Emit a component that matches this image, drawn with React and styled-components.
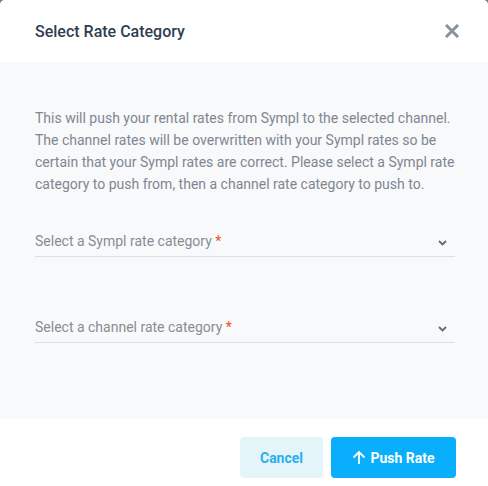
import React from 'react';
import styled, { createGlobalStyle } from 'styled-components';

const GlobalStyle = createGlobalStyle`
  html, body {
    margin: 0;
    padding: 0;
    background: #7a7a7a;
  }
  * { box-sizing: border-box; }
`;

function App() {
  return (
    <>
      <GlobalStyle />
      <Modal>
        <Header>
          <Title>Select Rate Category</Title>
          <CloseButton aria-label="close">
            <svg width="14" height="14" viewBox="0 0 14 14">
              <path d="M2 2L12 12M12 2L2 12" stroke="#8a939d" strokeWidth="3" strokeLinecap="square" />
            </svg>
          </CloseButton>
        </Header>
        <Body>
          <Intro>
            This will push your rental rates from Sympl to the selected channel.
            The channel rates will be overwritten with your Sympl rates so be
            certain that your Sympl rates are correct. Please select a Sympl rate
            category to push from, then a channel rate category to push to.
          </Intro>
          <Field>
            <Placeholder>Select a Sympl rate category <Req>*</Req></Placeholder>
            <Chevron />
          </Field>
          <Field second>
            <Placeholder>Select a channel rate category <Req>*</Req></Placeholder>
            <Chevron />
          </Field>
        </Body>
        <Footer>
          <CancelButton>Cancel</CancelButton>
          <PushButton>
            <svg width="14" height="15" viewBox="0 0 14 15">
              <path d="M7 14V2M1.5 7.5L7 2l5.5 5.5" stroke="#fff" strokeWidth="1.8" fill="none" />
            </svg>
            Push Rate
          </PushButton>
        </Footer>
      </Modal>
    </>
  );
}

export default App;

function Chevron() {
  return (
    <ChevronBox>
      <svg width="9" height="6" viewBox="0 0 9 6">
        <path d="M1 1l3.5 3.5L8 1" stroke="#5d6b7a" strokeWidth="1.8" fill="none" />
      </svg>
    </ChevronBox>
  );
}

const Modal = styled.div`
  width: 488px;
  height: 486px;
  background: #fff;
  border-radius: 5px 5px 0 0;
  overflow: hidden;
  display: flex;
  flex-direction: column;
  font-family: Roboto, "Liberation Sans", sans-serif;
`;

const Header = styled.div`
  height: 62px;
  display: flex;
  align-items: center;
  justify-content: space-between;
  padding: 0 29px 0 35px;
  background: #fff;
`;

const Title = styled.h2`
  margin: 0;
  font-size: 16px;
  font-weight: 500;
  color: #2f3e50;
`;

const CloseButton = styled.button`
  border: 0;
  background: none;
  padding: 0;
  display: flex;
  cursor: pointer;
`;

const Body = styled.div`
  flex: 0 0 357px;
  background: #f8f9fa;
  padding: 45px 33px 0 35px;
`;

const Intro = styled.p`
  margin: 0 0 30px;
  font-size: 14px;
  line-height: 22px;
  color: #7e8791;
`;

const Field = styled.div`
  height: 32px;
  margin-top: ${p => (p.second ? '54px' : '0')};
  display: flex;
  align-items: center;
  justify-content: space-between;
  border-bottom: 1px solid #dcdfe3;
`;

const Placeholder = styled.span`
  font-size: 14px;
  color: #878d95;
`;

const Req = styled.span`
  color: #f04e23;
`;

const ChevronBox = styled.span`
  display: flex;
  padding: 4px 8px 0 0;
`;

const Footer = styled.div`
  flex: 1;
  display: flex;
  justify-content: flex-end;
  align-items: flex-start;
  gap: 8px;
  padding: 18px 32px 0 0;
  background: #fff;
`;

const BaseButton = styled.button`
  height: 41px;
  border: 0;
  border-radius: 4px;
  font-family: Roboto, "Liberation Sans", sans-serif;
  font-size: 14px;
  font-weight: 700;
  display: flex;
  align-items: center;
  justify-content: center;
  gap: 4px;
  cursor: pointer;
`;

const CancelButton = styled(BaseButton)`
  width: 83px;
  background: #e3f5f9;
  color: #2aaef0;
`;

const PushButton = styled(BaseButton)`
  width: 125px;
  background: #09aefd;
  color: #fff;
`;
